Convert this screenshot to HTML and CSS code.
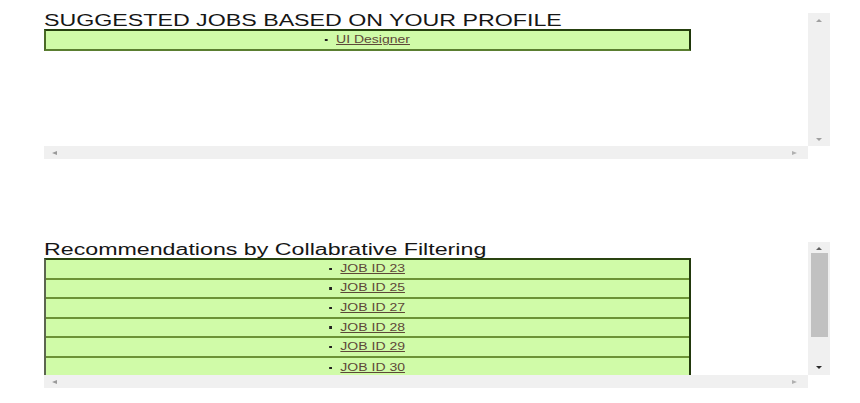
FILE: index.html
```html
<!DOCTYPE html>
<html>
<head>
<meta charset="utf-8">
<link rel="stylesheet" href="styles.css">
</head>
<body>
<div class="page">
  <section class="pane">
    <div class="view">
      <h2 class="title"><span class="stretch">SUGGESTED JOBS BASED ON YOUR PROFILE</span></h2>
      <div class="list list-single">
        <div class="row"><span class="item"><i class="dot"></i><a href="#">UI Designer</a></span></div>
      </div>
    </div>
    <div class="vbar">
      <span class="arr up off"></span>
      <span class="arr down off"></span>
    </div>
    <div class="hbar">
      <span class="arr left"></span>
      <span class="arr right"></span>
    </div>
    <div class="corner"></div>
  </section>

  <section class="pane pane-second">
    <div class="view">
      <h2 class="title"><span class="stretch">Recommendations by Collabrative Filtering</span></h2>
      <div class="list list-multi">
        <div class="row"><span class="item"><i class="dot"></i><a href="#">JOB ID 23</a></span></div>
        <div class="row"><span class="item"><i class="dot"></i><a href="#">JOB ID 25</a></span></div>
        <div class="row"><span class="item"><i class="dot"></i><a href="#">JOB ID 27</a></span></div>
        <div class="row"><span class="item"><i class="dot"></i><a href="#">JOB ID 28</a></span></div>
        <div class="row"><span class="item"><i class="dot"></i><a href="#">JOB ID 29</a></span></div>
        <div class="row row-last"><span class="item"><i class="dot"></i><a href="#">JOB ID 30</a></span></div>
      </div>
    </div>
    <div class="vbar">
      <span class="arr up on"></span>
      <span class="thumb"></span>
      <span class="arr down on"></span>
    </div>
    <div class="hbar">
      <span class="arr left"></span>
      <span class="arr right"></span>
    </div>
    <div class="corner"></div>
  </section>
</div>
</body>
</html>
```

FILE: styles.css
```css
html, body {
  margin: 0;
  padding: 0;
  background: #ffffff;
}

body {
  font-family: "Liberation Sans", Arial, sans-serif;
  color: #111111;
}

.page {
  padding: 13px 0 0 44px;
}

.pane {
  display: grid;
  grid-template-columns: 764px 22px;
  grid-template-rows: 133px 13px;
}

.pane-second {
  margin-top: 83px;
}

.view {
  overflow: hidden;
}

.title {
  margin: 0;
  font-weight: normal;
  font-size: 16px;
  line-height: 16px;
  height: 16px;
  color: #161616;
  white-space: nowrap;
}

.stretch {
  display: inline-block;
  transform: scaleX(1.45);
  transform-origin: 0 50%;
}

.list {
  width: 647px;
  box-sizing: border-box;
  background: #d0fba8;
}

.list-single {
  border-top: 2px solid #26400e;
  border-left: 2px solid #4a6a26;
  border-right: 2px solid #1f360a;
  border-bottom: 2px solid #5a7e30;
}

.list-single .row {
  height: 18px;
}

.list-multi {
  border-top: 2px solid #2a4410;
  border-left: 2px solid #5c6650;
  border-right: 2px solid #22380c;
}

.list-multi .row {
  height: 17.6px;
  border-bottom: 2px solid #6c9236;
}

.list-multi .row-last {
  height: 20px;
  border-bottom: 0;
}

.row {
  display: flex;
  align-items: center;
  justify-content: center;
}

.item {
  display: inline-flex;
  align-items: center;
  gap: 6px;
  font-size: 10px;
  line-height: 12px;
  transform: scaleX(1.4);
  transform-origin: 50% 50%;
  white-space: nowrap;
}

.dot {
  display: inline-block;
  width: 2px;
  height: 2.5px;
  background: #1e1e1e;
}

.item a {
  color: #5e4838;
  text-decoration: underline;
}

.vbar {
  background: #f0f0f0;
  display: flex;
  flex-direction: column;
  align-items: center;
  padding: 6px 0 5px;
  box-sizing: border-box;
}

.pane-second .vbar {
  padding: 5px 0 6px;
}

.vbar .down {
  margin-top: auto;
}

.thumb {
  width: 17px;
  height: 84px;
  margin: 3px 0 0 1px;
  background: #c1c1c1;
}

.hbar {
  background: #f0f0f0;
  display: flex;
  align-items: center;
  justify-content: space-between;
  padding: 0 11px 0 8px;
}

.corner {
  background: #ffffff;
}

.arr {
  display: block;
  width: 0;
  height: 0;
}

.up {
  border-left: 3.5px solid transparent;
  border-right: 3.5px solid transparent;
  border-bottom: 3px solid #a0a0a0;
}

.down {
  border-left: 3.5px solid transparent;
  border-right: 3.5px solid transparent;
  border-top: 3px solid #a0a0a0;
}

.up.on {
  border-bottom-color: #606060;
}

.down.on {
  border-top-color: #2a2a2a;
}

.left {
  border-top: 2.5px solid transparent;
  border-bottom: 2.5px solid transparent;
  border-right: 5px solid #9a9a9a;
}

.right {
  border-top: 2.5px solid transparent;
  border-bottom: 2.5px solid transparent;
  border-left: 5px solid #b0b0b0;
}
```
